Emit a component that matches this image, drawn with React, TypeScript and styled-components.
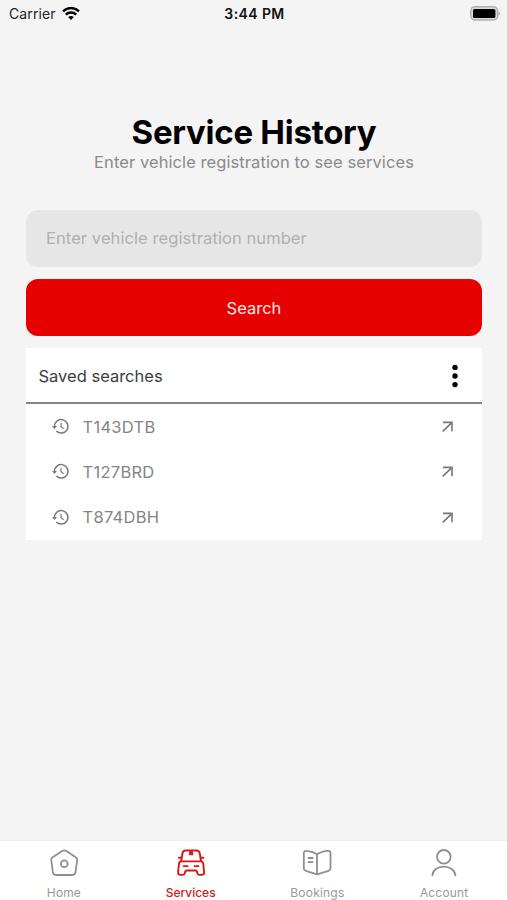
import React from "react";
import styled, { createGlobalStyle } from "styled-components";

const GlobalStyle = createGlobalStyle`
  * { box-sizing: border-box; }
  body { margin: 0; background: #f4f4f4; }
  button, input { font: inherit; letter-spacing: inherit; border: 0; padding: 0; margin: 0; background: none; }
  svg { display: block; flex: none; }
`;

const Screen = styled.div`
  width: 507px;
  height: 900px;
  display: flex;
  flex-direction: column;
  overflow: hidden;
  background: #f4f4f4;
  font-family: Inter, "Liberation Sans", sans-serif;
`;

const StatusBar = styled.header`
  height: 27px;
  padding: 0 6px 0 9px;
  display: grid;
  grid-template-columns: 1fr auto 1fr;
  align-items: center;
  font-size: 14px;
  color: #222;
`;

const Carrier = styled.div`
  display: flex;
  align-items: center;
  gap: 6px;
  letter-spacing: 0.1px;
`;

const Clock = styled.div`
  font-weight: 600;
  letter-spacing: 0.4px;
  margin-right: 1px;
  color: #111;
`;

const Battery = styled.div`
  justify-self: end;
`;

const Content = styled.main`
  flex: 1;
  padding: 85px 25px 0 26px;
`;

const Title = styled.h1`
  margin: 0;
  height: 40px;
  line-height: 40px;
  text-align: center;
  font-size: 33px;
  font-weight: 700;
  letter-spacing: -0.26px;
  color: #000;
`;

const Subtitle = styled.p`
  margin: 0 0 37px;
  height: 21px;
  line-height: 21px;
  text-align: center;
  font-size: 16.5px;
  letter-spacing: 0.08px;
  color: #8a8a8a;
`;

const RegistrationInput = styled.input`
  && {
    display: block;
    width: 100%;
    height: 57px;
    padding: 0 20px 2px;
    border-radius: 12px;
    background: #e6e6e6;
    font-size: 16.5px;
    letter-spacing: 0.08px;
    outline: none;
  }
  &::placeholder { color: #b0b0b0; opacity: 1; }
`;

const SearchButton = styled.button`
  && {
    display: block;
    width: 100%;
    height: 57px;
    margin: 12px 0;
    border-radius: 12px;
    background: #e60000;
    color: #ffe9e9;
    font-size: 16.5px;
  }
`;

const Saved = styled.section`
  background: #fff;
  height: 192px;
`;

const SavedHeader = styled.div`
  height: 56px;
  padding: 2px 23px 0 12.5px;
  display: flex;
  align-items: center;
  justify-content: space-between;
  border-bottom: 2px solid #858585;
  font-size: 16.5px;
  color: #3d3d3d;
`;

const SavedRow = styled.div`
  height: 45.3px;
  padding: 0 28px 0 26px;
  display: flex;
  align-items: center;
`;

const Plate = styled.span`
  flex: 1;
  margin-left: 13.5px;
  font-size: 16.5px;
  letter-spacing: 0.28px;
  color: #858585;
`;

const TabBar = styled.nav`
  height: 60px;
  display: grid;
  grid-template-columns: repeat(4, 1fr);
  background: #fff;
  border-top: 1px solid #ececec;
`;

const Tab = styled.div<{ $active?: boolean }>`
  display: flex;
  flex-direction: column;
  align-items: center;
  padding: 7px 0 0 1px;
  color: ${(p) => (p.$active ? "#dc1414" : "#8f8f8f")};
`;

const TabLabel = styled.span<{ $active?: boolean; $spacing: number }>`
  margin-top: 7px;
  font-size: 12px;
  line-height: 16px;
  font-weight: ${(p) => (p.$active ? 500 : 400)};
  letter-spacing: ${(p) => p.$spacing}px;
  color: ${(p) => (p.$active ? "#dc1414" : "#999")};
`;

const WifiIcon = () => (
  <svg width="18" height="14" viewBox="0 0 18 14" fill="none" stroke="#000" strokeWidth="2.5">
    <path d="M1 4.3C5.5 0 12.5 0 17 4.3" />
    <path d="M3.8 7.6c2.8-2.7 7.6-2.7 10.4 0" />
    <path d="M6.2 10.1c1.5-1.5 4.1-1.5 5.6 0L9 12.9z" fill="#000" stroke="none" />
  </svg>
);

const BatteryIcon = () => (
  <svg width="31" height="15" viewBox="0 0 31 15">
    <rect x="0.8" y="0.8" width="26.8" height="13.2" rx="4" fill="#dcdcdc" stroke="#b0b0b0" strokeWidth="1.4" />
    <rect x="3" y="3" width="22.4" height="9" rx="1.6" fill="#000" />
    <path d="M28.5 5.2c2 .8 2 3.7 0 4.5z" fill="#b0b0b0" />
  </svg>
);

const HistoryIcon = () => (
  <svg width="17" height="17" viewBox="0 0 17 17" fill="none" stroke="#777" strokeWidth="1.5">
    <path d="M2.5 8.2A6.7 6.7 0 1 1 4.4 13" />
    <path d="M0 8h5L2.5 10.9z" fill="#777" stroke="none" />
    <path d="M9 4.7v3.7l2.5 2.4" strokeWidth="1.2" />
  </svg>
);

const ArrowIcon = () => (
  <svg width="13" height="13" viewBox="0 0 13 13" fill="none" stroke="#777" strokeWidth="1.6">
    <path d="M2 2.4h9v8.9M11 2.4 1.8 11.4" />
  </svg>
);

const MoreIcon = () => (
  <svg width="8" height="24" viewBox="0 0 8 24">
    <circle cx="4" cy="3.4" r="2.7" />
    <circle cx="4" cy="12" r="2.7" />
    <circle cx="4" cy="20.6" r="2.7" />
  </svg>
);

const tabIcon = {
  width: 30,
  height: 30,
  viewBox: "0 0 30 30",
  fill: "none",
  stroke: "currentColor",
  strokeWidth: 1.8,
  strokeLinejoin: "round",
  strokeLinecap: "round",
} as const;

const HomeIcon = () => (
  <svg {...tabIcon}>
    <path d="M13.1 3 3.3 9.6c-.9.6-1.2 1.4-1.1 2.4l1.7 12.2c.3 1.9 1.2 2.8 3.1 2.8h16.4c1.9 0 2.8-.9 3.1-2.8L28.2 12c.1-1-.2-1.8-1.1-2.4L17.3 3c-1.5-1-2.7-1-4.2 0z" />
    <circle cx="15.3" cy="15.8" r="3.4" />
  </svg>
);

const CarIcon = () => (
  <svg {...tabIcon} strokeWidth={1.9}>
    <path d="M5.2 13 6.4 5.5C6.8 3.2 7.6 2.5 9.7 2.5h10.8c2.1 0 2.9.7 3.3 3L25 13" />
    <path d="M13.2 6.4 14 3.2h2.2l.8 3.2z" fill="currentColor" strokeWidth="1" />
    <path d="M2.9 9.8h2.2M25.1 9.8h2.2" />
    <path d="M5.4 13.4h19.4c1.5 0 2.2.8 2.4 2.2l.9 8.4c.2 2-.6 2.9-2.4 2.9h-2c-1.2 0-2-.5-2.3-1.7l-.4-1.6c-.2-.8-.6-1.1-1.4-1.1h-9c-.8 0-1.2.3-1.4 1.1l-.4 1.6c-.3 1.2-1.1 1.7-2.3 1.7h-2c-1.8 0-2.6-.9-2.4-2.9l.9-8.4c.2-1.4.9-2.2 2.4-2.2z" />
    <path d="M7.7 18.2h4M18.5 18.2h4" strokeWidth="1.7" />
  </svg>
);

const BookIcon = () => (
  <svg {...tabIcon}>
    <path d="M15 6.3C12.5 4.5 9 3.4 5.1 2.9 3.2 2.6 1.8 3.2 1.8 5v15.3c0 1.5.5 2.2 1.9 2.6L15 26.3l11.6-3.4c1.4-.4 1.9-1.1 1.9-2.6V5c0-1.8-1.2-2.4-3.1-2.1C21.2 3.5 17.5 4.5 15 6.3zM15 6.3v20" />
    <path d="M6.5 10h4.2M6.5 14.2h4.2" />
  </svg>
);

const AccountIcon = () => (
  <svg {...tabIcon}>
    <circle cx="14.8" cy="8.8" r="6.8" />
    <path d="M3.4 27.3c.4-5.2 5-8.7 11.4-8.7s11 3.5 11.6 8.7" />
  </svg>
);

const plates = ["T143DTB", "T127BRD", "T874DBH"];

const tabs = [
  { label: "Home", Icon: HomeIcon, spacing: 0.1 },
  { label: "Services", Icon: CarIcon, spacing: 0 },
  { label: "Bookings", Icon: BookIcon, spacing: 0.2 },
  { label: "Account", Icon: AccountIcon, spacing: 0.15 },
];

export default function App() {
  return (
    <Screen>
      <GlobalStyle />
      <StatusBar>
        <Carrier>Carrier <WifiIcon /></Carrier>
        <Clock>3:44 PM</Clock>
        <Battery><BatteryIcon /></Battery>
      </StatusBar>
      <Content>
        <Title>Service History</Title>
        <Subtitle>Enter vehicle registration to see services</Subtitle>
        <RegistrationInput placeholder="Enter vehicle registration number" />
        <SearchButton>Search</SearchButton>
        <Saved>
          <SavedHeader>
            Saved searches
            <MoreIcon />
          </SavedHeader>
          {plates.map((plate) => (
            <SavedRow key={plate}>
              <HistoryIcon />
              <Plate>{plate}</Plate>
              <ArrowIcon />
            </SavedRow>
          ))}
        </Saved>
      </Content>
      <TabBar>
        {tabs.map(({ label, Icon, spacing }) => {
          const active = label === "Services";
          return (
            <Tab key={label} $active={active}>
              <Icon />
              <TabLabel $active={active} $spacing={spacing}>{label}</TabLabel>
            </Tab>
          );
        })}
      </TabBar>
    </Screen>
  );
}
